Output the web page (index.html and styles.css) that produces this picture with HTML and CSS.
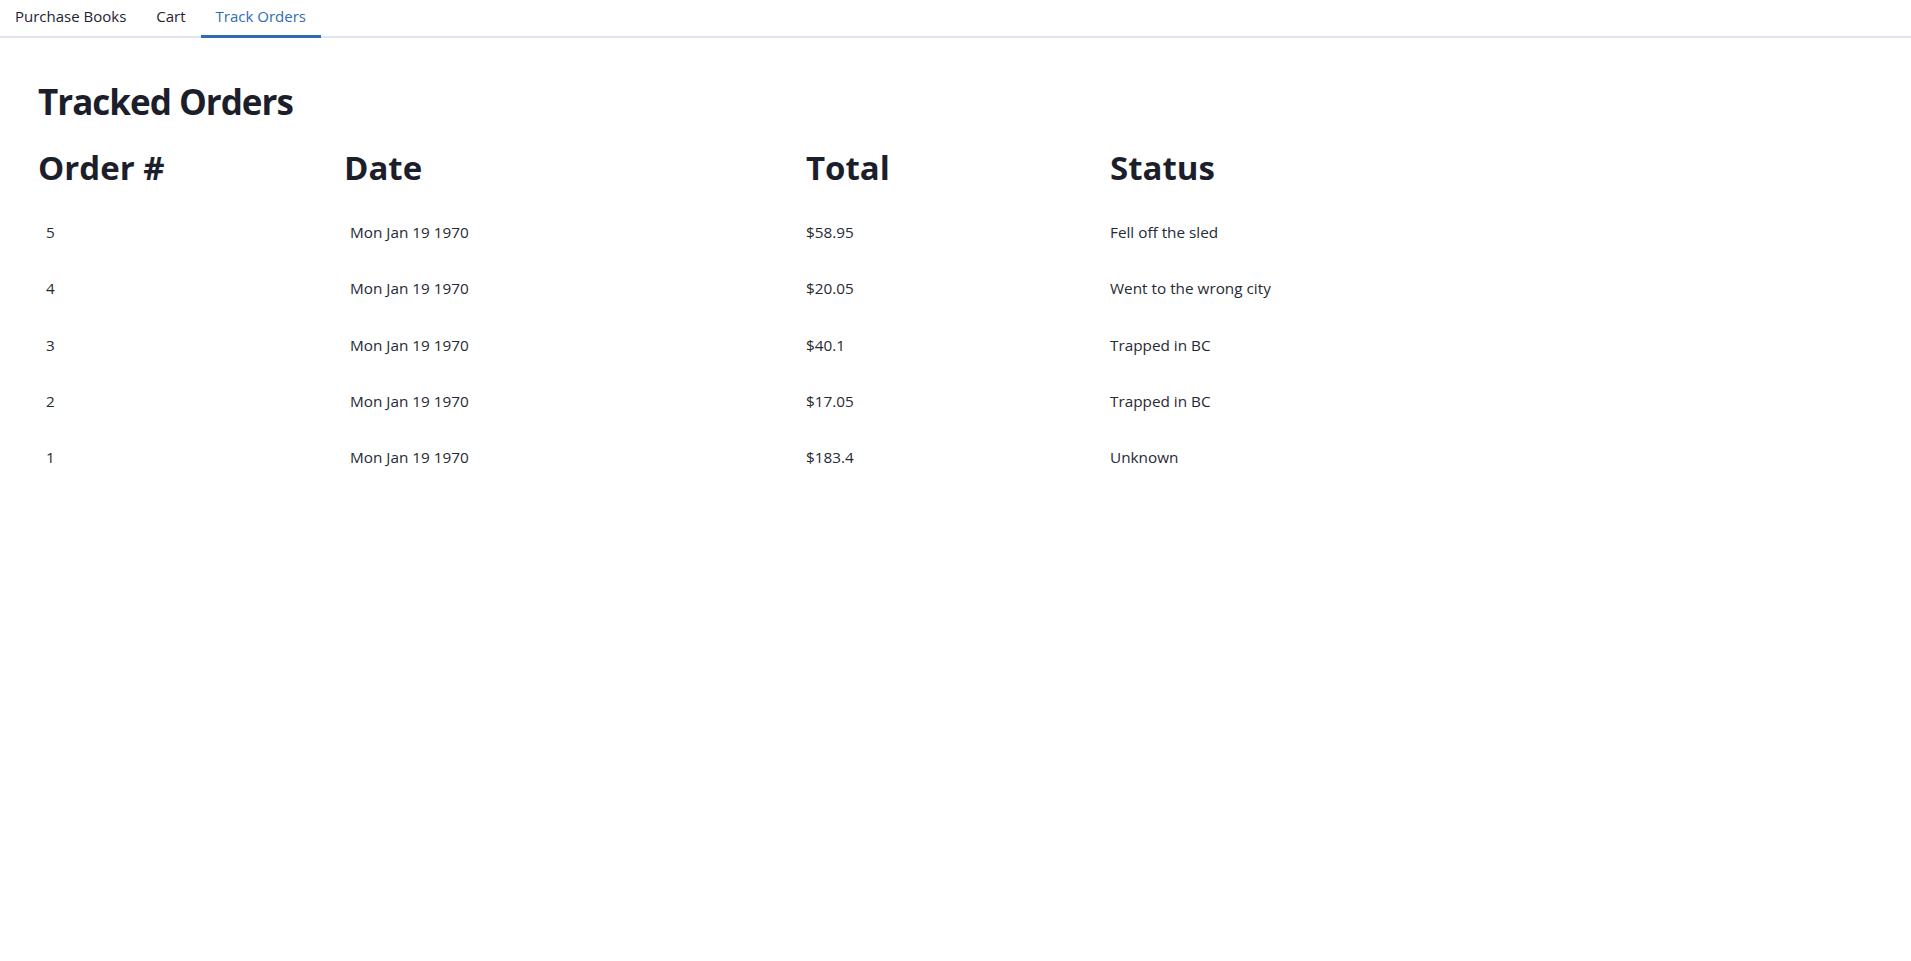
FILE: index.html
```html
<!DOCTYPE html>
<html lang="en">
<head>
<meta charset="utf-8">
<title>Track Orders</title>
<link rel="stylesheet" href="styles.css">
</head>
<body>
<nav class="tabs">
  <a class="tab" href="#">Purchase Books</a>
  <a class="tab" href="#">Cart</a>
  <a class="tab active" href="#">Track Orders</a>
</nav>
<main class="page">
  <h1 class="title">Tracked Orders</h1>
  <div class="orders">
    <div class="row head">
      <h2 class="hcell">Order #</h2>
      <h2 class="hcell">Date</h2>
      <h2 class="hcell">Total</h2>
      <h2 class="hcell">Status</h2>
    </div>
    <div class="row">
      <div class="cell c1">5</div><div class="cell c2">Mon Jan 19 1970</div><div class="cell c3">$58.95</div><div class="cell c4">Fell off the sled</div>
    </div>
    <div class="row">
      <div class="cell c1">4</div><div class="cell c2">Mon Jan 19 1970</div><div class="cell c3">$20.05</div><div class="cell c4">Went to the wrong city</div>
    </div>
    <div class="row">
      <div class="cell c1">3</div><div class="cell c2">Mon Jan 19 1970</div><div class="cell c3">$40.1</div><div class="cell c4">Trapped in BC</div>
    </div>
    <div class="row">
      <div class="cell c1">2</div><div class="cell c2">Mon Jan 19 1970</div><div class="cell c3">$17.05</div><div class="cell c4">Trapped in BC</div>
    </div>
    <div class="row">
      <div class="cell c1">1</div><div class="cell c2">Mon Jan 19 1970</div><div class="cell c3">$183.4</div><div class="cell c4">Unknown</div>
    </div>
  </div>
</main>
</body>
</html>
```
FILE: styles.css
```css
* { box-sizing: border-box; }
html, body { margin: 0; padding: 0; background: #fff; }
body {
  font-family: "Open Sans", "Noto Sans", "Liberation Sans", sans-serif;
  color: #1f2330;
}
.tabs {
  display: flex;
  height: 38px;
  border-bottom: 2px solid #dfe4ee;
}
.tab {
  display: block;
  padding: 0 15px;
  height: 38px;
  line-height: 33px;
  font-size: 15px;
  color: #1f2330;
  text-decoration: none;
  margin-bottom: -2px;
  border-bottom: 3px solid transparent;
}
.tab.active {
  color: #2f6db3;
  border-bottom-color: #2e6bb1;
}
.page {
  padding: 0 38px;
}
.title {
  margin: 0;
  padding-top: 40px;
  font-size: 35px;
  letter-spacing: -1px;
  line-height: 48px;
  font-weight: 700;
  color: #1c1f2b;
}
.row {
  display: grid;
  grid-template-columns: 306px 462px 304px 1fr;
}
.row.head { height: 78px; padding-top: 20px; }
.hcell {
  margin: 0;
  font-size: 33px;
  line-height: 44px;
  font-weight: 700;
  color: #1c1f2b;
}
.cell {
  height: 56.3px;
  display: flex;
  align-items: center;
  font-size: 15.3px;
  color: #262a35;
}
.c1 { padding-left: 8px; }
.c2 { padding-left: 6px; }
```
